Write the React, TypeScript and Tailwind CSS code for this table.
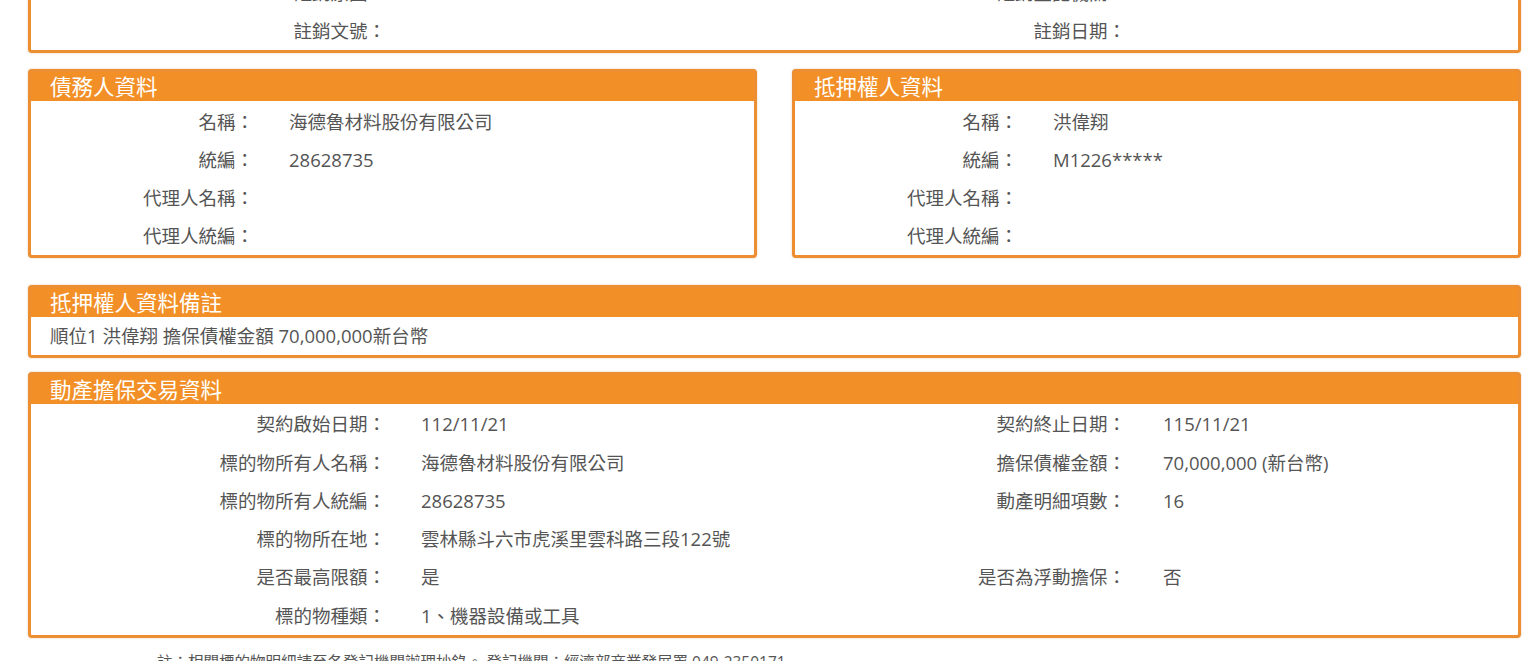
import React from "react";

type Pair = [string, string];

const FONT = { fontFamily: '"Open Sans", "Noto Sans CJK TC", "Noto Sans", sans-serif' };

function Panel({ title, children, className = "" }: { title?: string; children: React.ReactNode; className?: string }) {
  return (
    <div
      className={`rounded-[4px] border-[3px] border-[#ec8e31] bg-white shadow-[0_0_2px_rgba(160,90,20,0.35)] ${className}`}
    >
      {title && (
        <div className="h-[29px] bg-[#f28f26] pl-[19px] text-[21.5px] leading-[30px] text-white">
          {title}
        </div>
      )}
      {children}
    </div>
  );
}

// two-column rows (label / value) for the half-width panels
function HalfRows({ rows }: { rows: Pair[] }) {
  return (
    <div className="pt-[2px]">
      {rows.map(([label, value]) => (
        <div key={label} className="flex h-[38px] items-center text-[18.5px] text-[#555]">
          <div className="w-[223px] text-right">{label}</div>
          <div className="pl-[35px]">{value}</div>
        </div>
      ))}
    </div>
  );
}

// four-column rows for the wide panels
function WideRows({ rows, rowClass = "h-[38px]" }: { rows: [string, string, string, string][]; rowClass?: string }) {
  return (
    <>
      {rows.map(([l1, v1, l2, v2], i) => (
        <div key={i} className={`flex items-center text-[18.5px] text-[#555] ${rowClass}`}>
          <div className="w-[355px] shrink-0 text-right whitespace-nowrap">{l1}</div>
          <div className="w-[440px] shrink-0 pl-[35px] whitespace-nowrap">{v1}</div>
          <div className="w-[300px] shrink-0 text-right whitespace-nowrap">{l2}</div>
          <div className="pl-[37px] whitespace-nowrap">{v2}</div>
        </div>
      ))}
    </>
  );
}

export default function App() {
  return (
    <div className="h-[661px] overflow-hidden bg-white" style={FONT}>
      <div className="ml-[28px] w-[1493px]">
        {/* tail of the previous panel, scrolled out of view */}
        <div className="-mt-[26px] rounded-b-[4px] border-[3px] border-t-0 border-[#ec8e31] bg-white shadow-[0_0_2px_rgba(160,90,20,0.35)]">
          <WideRows
            rows={[
              ["註銷原因：", "", "註銷登記機關：", ""],
              ["註銷文號：", "", "註銷日期：", ""],
            ]}
          />
        </div>

        <div className="mt-[16px] flex gap-[35px]">
          <Panel title="債務人資料" className="w-[729px]">
            <HalfRows
              rows={[
                ["名稱：", "海德魯材料股份有限公司"],
                ["統編：", "28628735"],
                ["代理人名稱：", ""],
                ["代理人統編：", ""],
              ]}
            />
          </Panel>
          <Panel title="抵押權人資料" className="w-[729px]">
            <HalfRows
              rows={[
                ["名稱：", "洪偉翔"],
                ["統編：", "M1226*****"],
                ["代理人名稱：", ""],
                ["代理人統編：", ""],
              ]}
            />
          </Panel>
        </div>

        <Panel title="抵押權人資料備註" className="mt-[27px]">
          <div className="flex h-[38px] items-center pl-[19px] text-[18.5px] text-[#555]">
            順位1 洪偉翔 擔保債權金額 70,000,000新台幣
          </div>
        </Panel>

        <Panel title="動產擔保交易資料" className="mt-[14px]">
          <div className="h-[1px]" />
          <WideRows
            rowClass="h-[38.3px]"
            rows={[
              ["契約啟始日期：", "112/11/21", "契約終止日期：", "115/11/21"],
              ["標的物所有人名稱：", "海德魯材料股份有限公司", "擔保債權金額：", "70,000,000 (新台幣)"],
              ["標的物所有人統編：", "28628735", "動產明細項數：", "16"],
              ["標的物所在地：", "雲林縣斗六市虎溪里雲科路三段122號", "", ""],
              ["是否最高限額：", "是", "是否為浮動擔保：", "否"],
              ["標的物種類：", "1、機器設備或工具", "", ""],
            ]}
          />
        </Panel>

        <p className="mt-[13px] pl-[129px] text-[15.5px] leading-[22px] text-[#555]">
          註：相關標的物明細請至各登記機關辦理抄錄。 登記機關：經濟部商業發展署 049-2350171
        </p>
      </div>
    </div>
  );
}
